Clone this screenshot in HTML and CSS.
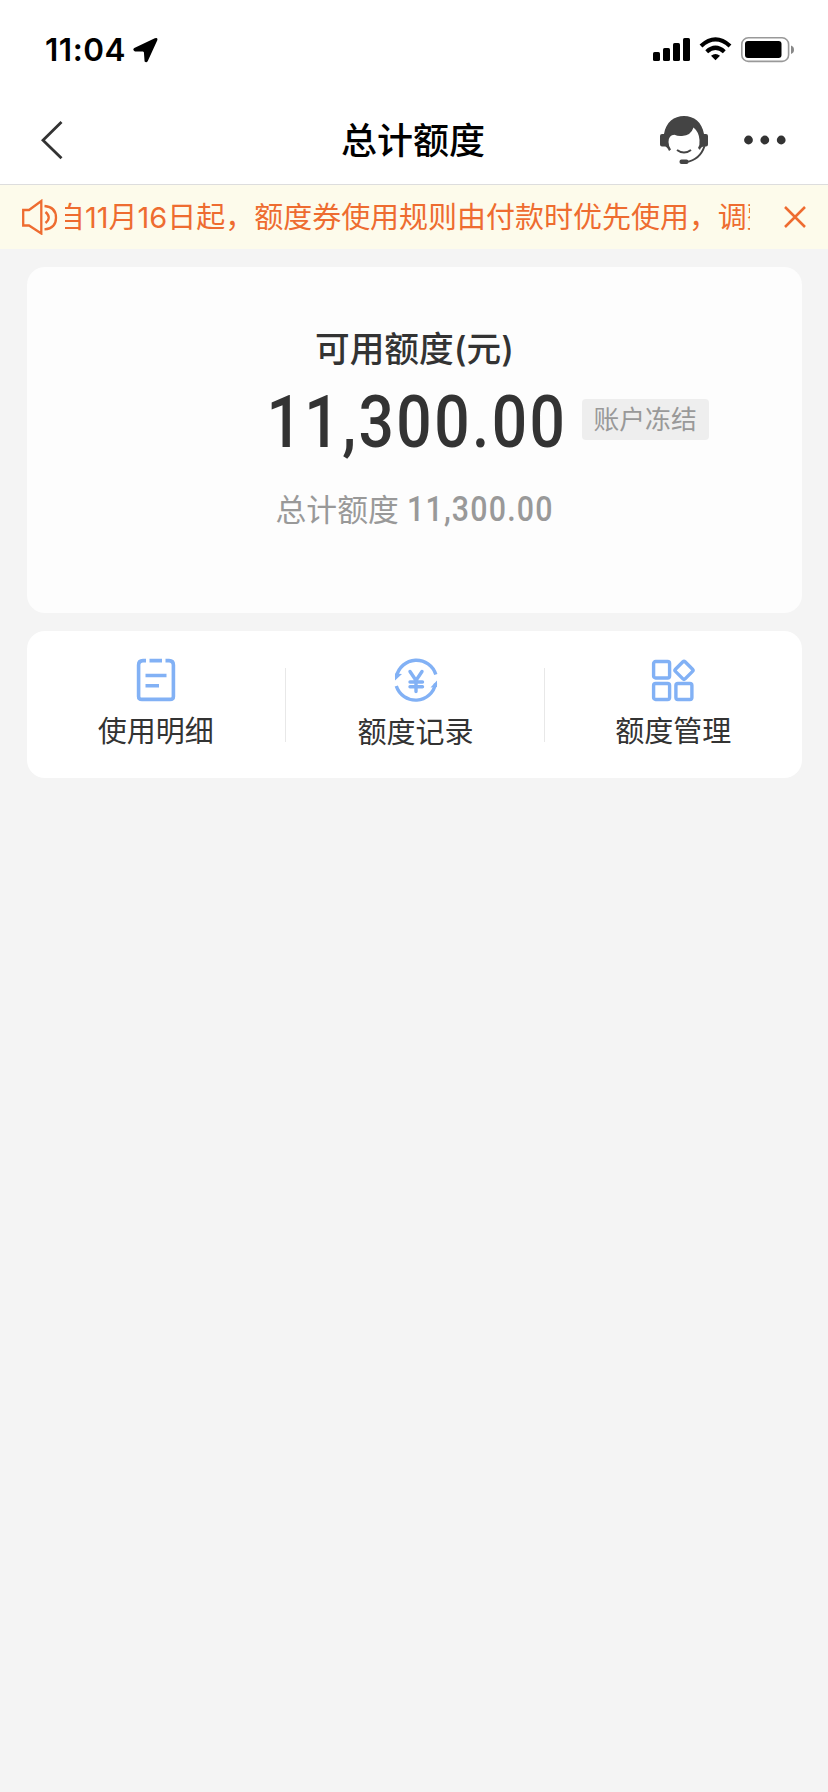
FILE: index.html
```html
<!DOCTYPE html>
<html lang="zh-CN">
<head>
<meta charset="utf-8">
<title>总计额度</title>
<link rel="stylesheet" href="styles.css">
</head>
<body>
<div class="status">
  <span class="time">11:04</span>
  <svg class="location" width="26" height="26" viewBox="0 0 26 26"><path d="M1.300 11 21.800 1.200Q25 0 24.300 3.300L14.800 24Q13.600 26 11.600 24.600L10.900 15.200 10 14.400H2Q-1 13 1.300 11Z"/></svg>
  <svg class="signals" width="144" height="26" viewBox="0 0 144 26">
    <rect x="1" y="15" width="7" height="9" rx="1.6"/>
    <rect x="11" y="11" width="7" height="13" rx="1.6"/>
    <rect x="21" y="6" width="7" height="18" rx="1.6"/>
    <rect x="31" y="1" width="7" height="23" rx="1.6"/>
    <g fill="none" stroke="#000" stroke-width="4.2"><path d="M49 9Q63.500-4.200 78 9"/><path d="M54.700 14.800Q63.500 6.800 72.300 14.800"/></g>
    <path d="M59 18.700Q63.500 15.300 68 18.700L63.500 23.300Z"/>
    <rect x="89.800" y=".8" width="46.800" height="23.600" rx="6.500" fill="none" stroke="#999" stroke-width="1.6"/>
    <rect x="93" y="4" width="36.500" height="17" rx="3"/>
    <path d="M139 8.500Q142 9.500 142 12.700T139 17Z" fill="#888"/>
  </svg>
</div>
<header class="nav">
  <svg class="back" width="26" height="40" viewBox="0 0 26 40"><path d="M23.500 2 5 20.200 23.500 38.300" fill="none" stroke="#333" stroke-width="2.800"/></svg>
  <h1 class="title">总计额度</h1>
  <div class="tools">
    <svg width="48" height="48" viewBox="0 0 48 48">
      <path fill="#444" d="M4 18C6 6 14 0 24 0s18 6 20 18h2q2 0 2 2v8.500q0 2-2 2h-2.500q-3 .5-3.500 3.500l-2-2Q40 29 39.500 24 39 16 33.500 11.500 31 19.500 22 20q-4 .5-7.500-1.300Q8.500 19 8.500 26q0 4 2.500 7.500L9 35q-2-4.500-4-4.500H2q-2 0-2-2V20q0-2 2-2Z"/>
      <path d="M17 34Q24 39.200 31 34" fill="none" stroke="#444" stroke-width="2"/>
      <path d="M44.500 30Q40 44 26 46" fill="none" stroke="#444" stroke-width="2"/>
      <rect x="19.500" y="43.500" width="9" height="4.500" rx="2" fill="#444"/>
    </svg>
    <svg width="42" height="10" viewBox="0 0 42 10" fill="#333"><circle cx="4.500" cy="5" r="4.400"/><circle cx="20.800" cy="5" r="4.400"/><circle cx="37.200" cy="5" r="4.400"/></svg>
  </div>
</header>
<div class="notice">
  <svg class="speaker" width="36" height="36" viewBox="0 0 36 36" fill="none" stroke="currentColor" stroke-width="2.300"><path d="M1.200 11H7L19.300 2V34.500L7 26.500H1.200ZM23.500 13q6.500 5.500 0 11M22.500 7q11.500 1 11.500 11.700t-11.500 11.700"/></svg>
  <div class="marquee"><span class="message">自11月16日起，额度券使用规则由付款时优先使用，调整</span></div>
  <svg class="close" width="22" height="22" viewBox="0 0 22 22"><path d="M1 1 21 21M21 1 1 21" stroke="currentColor" stroke-width="2.500"/></svg>
</div>
<main class="content">
  <section class="card summary">
    <h2 class="summary-title">可用额度(元)</h2>
    <div class="amount-row">
      <span class="amount"><span class="din">11,300.00</span></span>
      <span class="badge">账户冻结</span>
    </div>
    <div class="total"><span>总计额度</span><span class="din">11,300.00</span></div>
  </section>
  <nav class="card actions">
    <a class="action">
      <svg width="44" height="44" viewBox="0 0 44 44" fill="none" stroke="#82b1f5" stroke-width="3.600"><path d="M12 2.600H9Q4.600 2.600 4.600 7v31.400Q4.600 41.400 8 41.400H36Q39.400 41.400 39.400 38.400V7Q39.400 2.600 35 2.600H31.500M15.500 2.600H28M11.500 17.500H32.500M11.500 27.800H25"/></svg>
      <span>使用明细</span>
    </a>
    <a class="action record">
      <svg width="44" height="44" viewBox="0 0 44 44" fill="none" stroke="#82b1f5" stroke-width="3.400"><path d="M2.500 18.500A20.300 20.300 0 0 1 41.800 16.500M2.300 28A20.300 20.300 0 0 0 41.600 25.500"/><path d="M1 15.500V22.500L8 16ZM43 29V22.500L36.500 29.500Z" fill="#82b1f5" stroke="none"/><path d="M16 13.500 22 22.500 28 13.500M22 22V33.500M16 24H28.500M16 28.800H28.500" stroke-linecap="round"/></svg>
      <span>额度记录</span>
    </a>
    <a class="action">
      <svg width="44" height="44" viewBox="0 0 44 44" fill="none" stroke="#82b1f5" stroke-width="3.400"><rect x="2.600" y="3.500" width="16" height="16.500" rx="2"/><rect x="2.600" y="25.500" width="16" height="16" rx="2"/><rect x="24.900" y="25.500" width="16" height="16" rx="2"/><rect x="26.200" y="5.500" width="13.600" height="13.600" rx="1.500" transform="rotate(45 33 12.300)"/></svg>
      <span>额度管理</span>
    </a>
  </nav>
</main>
</body>
</html>
```
FILE: styles.css
```css
* { box-sizing: border-box; }
body {
  margin: 0;
  min-height: 1792px;
  background: #f4f4f4;
  color: #333;
  font-family: Inter, "Noto Sans CJK SC", sans-serif;
}
svg { display: block; flex: none; }
h1, h2 { margin: 0; }
.status {
  display: flex;
  align-items: center;
  height: 100px;
  padding: 0 32px 0 45px;
  background: #fff;
}
.time {
  width: 88px;
  color: #000;
  font-size: 31.5px;
  font-weight: 600;
  letter-spacing: 0.5px;
  line-height: 38px;
}
.signals { margin-left: auto; }
.nav {
  display: grid;
  grid-template-columns: 1fr auto 1fr;
  align-items: center;
  height: 85px;
  padding: 0 42px 5px 40px;
  background: #fff;
  border-bottom: 1px solid #ddd;
}
.back { margin-left: -2px; }
.title {
  padding-top: 3px;
  color: #000;
  font-size: 36px;
  font-weight: 500;
  line-height: 48px;
}
.tools {
  display: flex;
  align-items: center;
  justify-content: flex-end;
  gap: 36px;
}
.notice {
  display: flex;
  align-items: center;
  height: 64px;
  padding: 0 22px;
  background: #fdfbeb;
  color: #ee6c30;
}
.marquee {
  display: flex;
  width: 685px;
  height: 64px;
  margin-left: 7px;
  overflow: hidden;
}
.message {
  flex: none;
  margin-left: -9px;
  font-size: 29px;
  letter-spacing: -0.02px;
  line-height: 65px;
  white-space: nowrap;
}
.close { margin-left: auto; }
.content {
  display: flex;
  flex-direction: column;
  gap: 18px;
  padding: 18px 26px 18px 27px;
}
.card { border-radius: 18px; background: #fff; }
.summary {
  display: flex;
  flex-direction: column;
  align-items: center;
  height: 346px;
  padding-top: 58px;
  background: #fdfdfd;
}
.summary-title {
  font-size: 34.7px;
  font-weight: 500;
  line-height: 48px;
}
.amount-row {
  display: grid;
  grid-template-columns: minmax(0, 1fr) 298px minmax(0, 1fr);
  align-items: center;
  width: 100%;
  height: 90px;
  margin-top: 1px;
}
.amount {
  display: flex;
  grid-column: 2;
  justify-content: center;
  padding: 6px 0 0 4px;
  font-size: 72px;
}
.din {
  display: inline-block;
  flex: none;
  font-family: Roboto, sans-serif;
  font-weight: 500;
  letter-spacing: 0.039em;
  transform: scaleX(0.88);
}
.amount .din { transform: scaleX(0.865); }
.badge {
  grid-column: 3;
  justify-self: start;
  height: 41px;
  margin-left: 18px;
  padding: 0 12px;
  border-radius: 4px;
  background: #eee;
  color: #999;
  font-size: 25.8px;
  line-height: 41px;
  white-space: nowrap;
}
.total {
  display: flex;
  align-items: center;
  height: 48px;
  margin-top: 19px;
  color: #999;
  font-size: 30.8px;
}
.total .din {
  padding-top: 4px;
  font-size: 34.5px;
  transform-origin: left;
  margin: 0 -20px 0 8px;
}
.actions {
  display: flex;
  height: 147px;
  padding: 27px 0;
}
.action {
  position: relative;
  display: flex;
  flex: 1;
  flex-direction: column;
  align-items: center;
  font-size: 29px;
  line-height: 40px;
}
.action span { margin-top: 10px; }
.record { padding-left: 2px; }
.record span { margin-top: 11px; }
.action + .action::before {
  content: "";
  position: absolute;
  top: 10px;
  left: 0;
  width: 1px;
  height: 74px;
  background: #e8e8e8;
}
```
